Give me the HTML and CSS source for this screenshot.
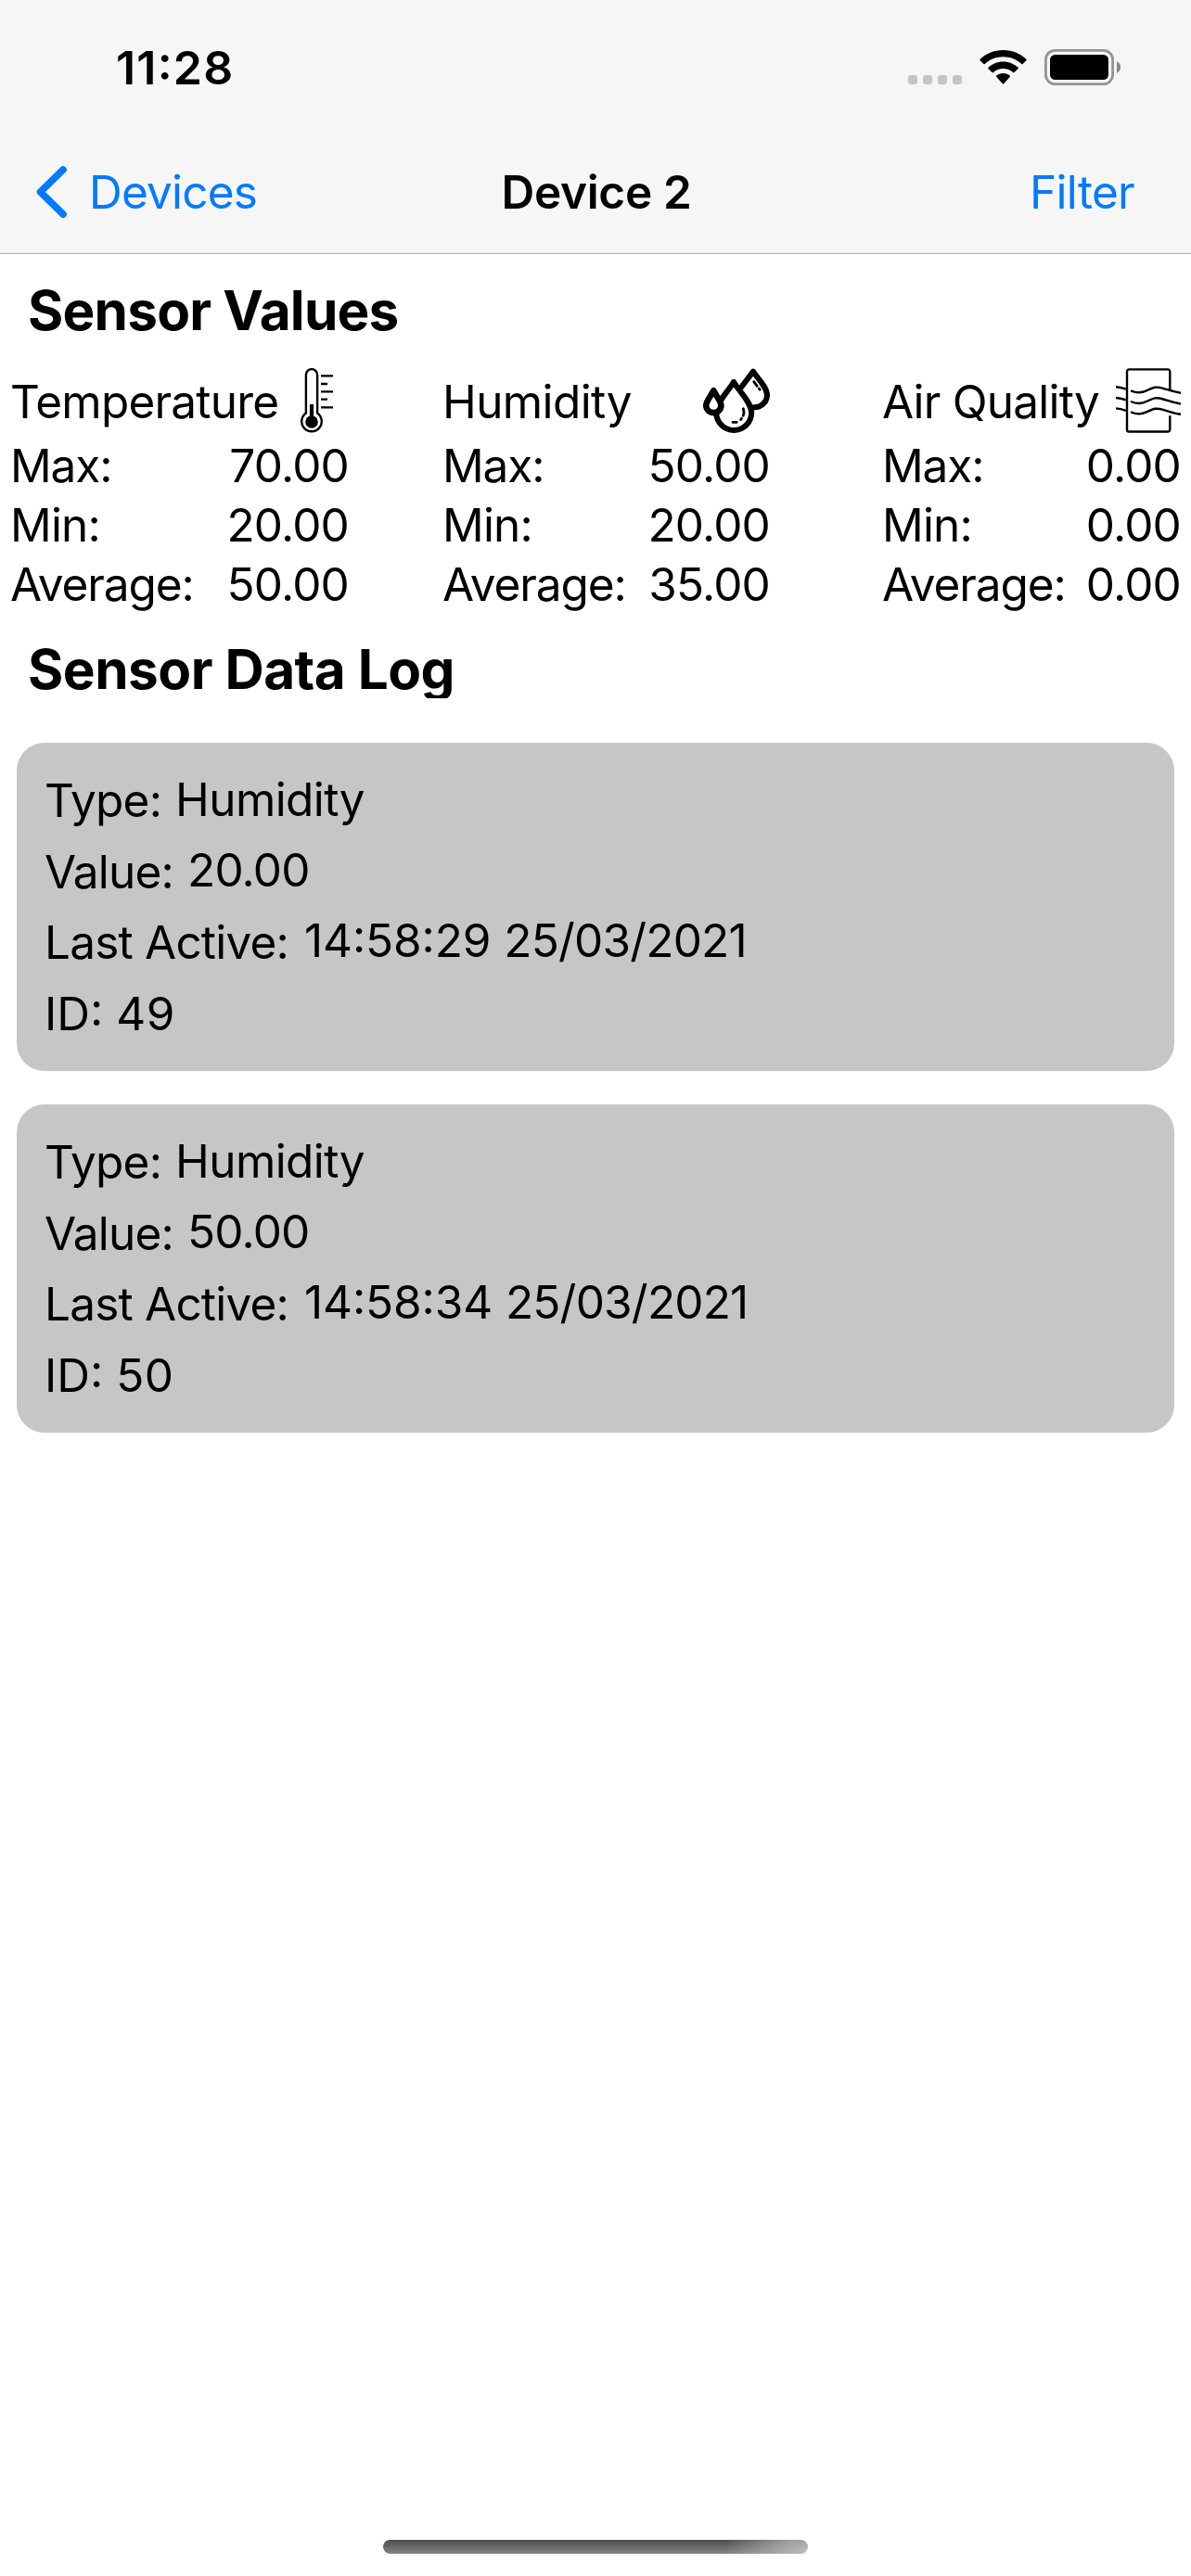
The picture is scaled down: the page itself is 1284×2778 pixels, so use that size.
FILE: index.html
```
<!DOCTYPE html>
<html lang="en">
<head>
<meta charset="utf-8">
<title>Device 2</title>
<link rel="stylesheet" href="styles.css">
</head>
<body>
<header class="header">
  <div class="status">
    <span class="time">11:28</span>
    <svg class="status-icons" viewBox="0 0 229 39" width="229" height="39">
      <g fill="#c4c4c4">
        <rect x="0" y="28" width="10" height="10" rx="3"/>
        <rect x="16" y="28" width="10" height="10" rx="3"/>
        <rect x="32" y="28" width="10" height="10" rx="3"/>
        <rect x="48" y="28" width="10" height="10" rx="3"/>
      </g>
      <g>
        <path d="M102.5 1C112.5 1 121.500 5 127.300 10.800Q128 11.500 127.300 12.300L123.600 16Q123 16.600 122.300 16C117 11 110 8.300 102.500 8.300S88 11 82.700 16Q82 16.600 81.400 16L77.700 12.300Q77 11.500 77.700 10.800C83.500 5 92.500 1 102.500 1Z"/>
        <path d="M102.500 13.500C109 13.500 114.500 16 118.500 19.800Q119.200 20.500 118.500 21.200L114.500 25.100Q113.800 25.700 113.100 25.100C110.200 22.500 106.500 21 102.500 21S94.800 22.500 91.900 25.100Q91.200 25.700 90.500 25.100L86.500 21.200Q85.800 20.500 86.500 19.800C90.500 16 96 13.500 102.500 13.500Z"/>
        <path d="M102.500 26C105.500 26 107.800 27 109.700 28.500Q110.400 29.200 109.700 29.900L103.200 37.200Q102.500 38 101.800 37.200L95.300 29.900Q94.600 29.200 95.300 28.500C97.200 27 99.500 26 102.500 26Z"/>
      </g>
      <rect x="148.400" y="1.400" width="72.200" height="36.200" rx="10" fill="none" stroke="#949494" stroke-width="2.800"/>
      <rect x="153" y="6" width="63" height="27" rx="5.500"/>
      <path d="M225 13.200C227.500 14.300 229 16.600 229 19.500S227.500 24.700 225 25.800Z" fill="#868686"/>
    </svg>
  </div>
  <nav class="nav">
    <a class="back">
      <svg viewBox="0 0 33 56" width="33" height="56"><path d="M29 4L4.500 28L29 52" fill="none" stroke="#007aff" stroke-width="7.600" stroke-linecap="round" stroke-linejoin="round"/></svg>
      <span>Devices</span>
    </a>
    <h1 class="title">Device 2</h1>
    <a class="filter">Filter</a>
  </nav>
</header>

<main>
  <h2 class="heading">Sensor Values</h2>
  <div class="stats">
    <section class="stat temperature">
      <div class="stat-head">
        <span>Temperature</span>
        <svg viewBox="0 0 70 70" width="70" height="70" fill="none" stroke="#000">
          <path d="M23.900 48.600V7.200a6.100 6.100 0 0 1 12.200 0V48.600A10.800 10.800 0 1 1 23.900 48.600Z" stroke-width="2.400"/>
          <path d="M30 39V58" stroke-width="4.200"/>
          <circle cx="30" cy="58" r="6.800" fill="#000" stroke="none"/>
          <path d="M40 8.300H53M40 17H47M40 25.300H53M40 33.700H47M40 42.300H53" stroke-width="2.300"/>
        </svg>
      </div>
      <div class="stat-row"><span class="label">Max:</span><span>70.00</span></div>
      <div class="stat-row"><span>Min:</span><span>20.00</span></div>
      <div class="stat-row"><span class="label">Average:</span><span>50.00</span></div>
    </section>
    <section class="stat humidity">
      <div class="stat-head">
        <span>Humidity</span>
        <svg viewBox="0 0 72 70" width="72" height="70" fill="none" stroke="#000" stroke-width="6" stroke-linejoin="round">
          <path d="M40.500 21.500L54 3.600C59 11.500 69 20 69 29.500A13.500 13.500 0 0 1 53 42"/>
          <path d="M33 14.800C28.500 23.500 14.200 36.500 14.200 48a19 19 0 0 0 38 0C52.200 36.500 37.500 23.500 33 14.800Z"/>
          <path d="M11.300 24.300C8.500 30 3.200 35.500 3.200 40.300a8.100 7.800 0 0 0 16.200 0C19.400 35.500 14.100 30 11.300 24.300Z" fill="#fff" stroke-width="6.600"/>
          <g stroke-width="2.800" stroke-linecap="round">
            <path d="M54.700 14.600L58.200 19.300M60.300 22L61.200 23.200"/>
            <path d="M43.300 43.800Q44.700 47.800 43.200 51.300M41.500 54.300L40.600 55.400M32 58.300H36.200"/>
          </g>
        </svg>
      </div>
      <div class="stat-row"><span class="label">Max:</span><span>50.00</span></div>
      <div class="stat-row"><span>Min:</span><span>20.00</span></div>
      <div class="stat-row"><span class="label">Average:</span><span>35.00</span></div>
    </section>
    <section class="stat air">
      <div class="stat-head">
        <span>Air Quality</span>
        <svg viewBox="0 0 70 70" width="70" height="70" fill="none" stroke="#000" stroke-width="2.400">
          <path d="M58.300 23V3.700a2.300 2.300 0 0 0-2.300-2.300H14.300a2.300 2.300 0 0 0-2.300 2.300V66.200a2.300 2.300 0 0 0 2.300 2.300H56a2.300 2.300 0 0 0 2.300-2.300V51.300"/>
          <path d="M0 20.300Q5 20.700 11 22.700M16 24.300C23 27 27 27 34 23.800S43 19.500 51 21.800S64 26 70 26.700"/>
          <path d="M0 32Q5 32.400 11 34.400M16 36C23 38.700 27 38.700 34 35.500S43 31.200 51 33.500S64 37.700 70 38.400"/>
          <path d="M0 43.400Q5 43.800 11 45.800M16 47.400C23 50.100 27 50.100 34 46.900S43 42.600 51 44.900S64 49.100 70 49.800"/>
        </svg>
      </div>
      <div class="stat-row"><span class="label">Max:</span><span>0.00</span></div>
      <div class="stat-row"><span>Min:</span><span>0.00</span></div>
      <div class="stat-row"><span class="label">Average:</span><span>0.00</span></div>
    </section>
  </div>

  <h2 class="heading log-heading">Sensor Data Log</h2>
  <div class="log">
    <article class="card">
      <div class="field type"><span>Type:</span><span class="value">Humidity</span></div>
      <div class="field"><span>Value:</span><span class="value">20.00</span></div>
      <div class="field"><span>Last Active:</span><span class="value stamp">14:58:29 <span class="date">25/03/2021</span></span></div>
      <div class="field id"><span>ID:</span><span class="value">49</span></div>
    </article>
    <article class="card">
      <div class="field type"><span>Type:</span><span class="value">Humidity</span></div>
      <div class="field"><span>Value:</span><span class="value">50.00</span></div>
      <div class="field"><span>Last Active:</span><span class="value stamp">14:58:34 <span class="date">25/03/2021</span></span></div>
      <div class="field id"><span>ID:</span><span class="value">50</span></div>
    </article>
  </div>
</main>
<div class="home-indicator"></div>
</body>
</html>
```
FILE: styles.css
```
* { box-sizing: border-box; }

body {
  margin: 0;
  width: 1284px;
  height: 2778px;
  display: flex;
  flex-direction: column;
  background: #fff;
  color: #000;
  font: 400 49.5px/60px Inter, "Liberation Sans", sans-serif;
  font-feature-settings: "calt" 1;
  letter-spacing: -0.8px;
  white-space: nowrap;
}

h1, h2 { margin: 0; }
svg { display: block; flex: none; }

.header {
  height: 274px;
  background: #f6f6f6;
  border-bottom: 1px solid #b0b0b0;
}

.status {
  height: 141px;
  padding: 43px 76px 0 125px;
  display: flex;
  justify-content: space-between;
  align-items: flex-start;
}

.time {
  font-size: 50px;
  font-weight: 600;
  letter-spacing: 1.2px;
}

.status-icons { margin-top: 10px; }

.nav {
  height: 132px;
  padding: 0 61px 0 39px;
  display: grid;
  grid-template-columns: 1fr auto 1fr;
  align-items: center;
}

.back {
  display: flex;
  align-items: center;
  gap: 24px;
  color: #007aff;
}

.title {
  padding-left: 24px;
  font-size: 49.5px;
  font-weight: 600;
  letter-spacing: -0.3px;
}

.filter {
  justify-self: end;
  color: #007aff;
  letter-spacing: -0.7px;
}

main { padding-top: 25px; }

.heading {
  height: 72px;
  padding-left: 30px;
  font-size: 58.5px;
  font-weight: 700;
  line-height: 72px;
}

/* The log title's frame is shorter than its line, so descenders are clipped. */
.log-heading {
  height: 67px;
  margin: 24px 0 48px;
  overflow: hidden;
  letter-spacing: -0.5px;
}

.stats {
  display: flex;
  margin-top: 25px;
  padding: 0 11px;
  justify-content: space-between;
}

.temperature { width: 365px; }
.humidity { width: 353px; margin-left: -20px; }
.air { width: 322px; }

.stat-head {
  height: 72px;
  margin-bottom: 2px;
  display: flex;
  justify-content: space-between;
  align-items: center;
}

.stat-head span { padding-top: 2px; }
.humidity .stat-head span { letter-spacing: -0.6px; }

.stat-row {
  display: flex;
  justify-content: space-between;
  line-height: 64px;
}

.label { letter-spacing: -1.1px; }

.log {
  display: grid;
  gap: 36px;
  padding: 0 18px;
}

.card {
  height: 354px;
  padding: 24px 30px;
  border-radius: 30px;
  background: #c6c6c8;
}

.field {
  display: flex;
  gap: 15px;
  height: 76.5px;
  line-height: 77px;
}

.value { margin-top: -2px; }
.type .value { margin-top: -1px; letter-spacing: -0.6px; }
.stamp { margin-left: 2px; letter-spacing: -0.1px; }
.date { letter-spacing: -0.8px; }
.id { letter-spacing: 0; }
.id .value { margin: 0 0 0 -1px; letter-spacing: 0.4px; }

.home-indicator {
  width: 458px;
  height: 15px;
  margin: auto auto 24px 413px;
  border-radius: 8px;
  background:
    radial-gradient(ellipse 90px 60px at 100% 100%, #bcbcbc, rgba(188, 188, 188, 0)),
    linear-gradient(#4c4e4d, #848484);
}
```
